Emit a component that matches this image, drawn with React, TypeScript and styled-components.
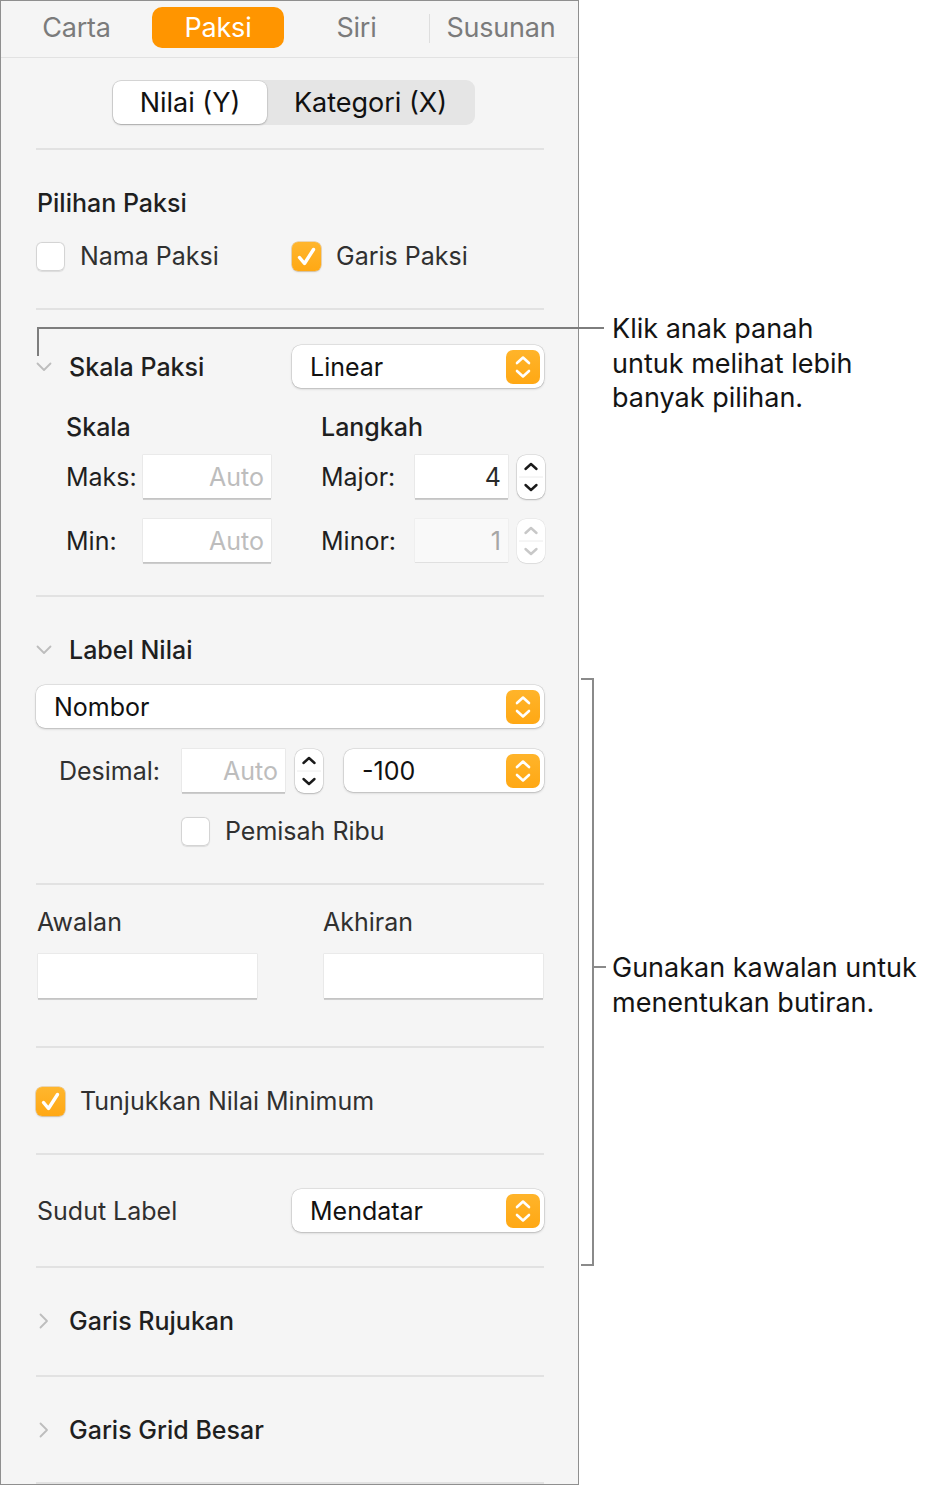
import React from "react";
import styled, { createGlobalStyle } from "styled-components";

const Global = createGlobalStyle`
  html, body { margin: 0; padding: 0; background: #ffffff; }
  body { font-family: Inter, "Noto Sans", sans-serif; -webkit-font-smoothing: antialiased; color: #222; }
  * { box-sizing: border-box; }
`;

const ORANGE = "#ff9500";
const ORANGE_LIGHT = "#ffa814";

const Page = styled.div`
  position: relative;
  width: 929px;
  height: 1485px;
  display: flex;
  align-items: flex-start;
`;

const Panel = styled.div`
  width: 579px;
  height: 1485px;
  background: #f5f5f5;
  border: 1px solid #8f8f8f;
  display: flex;
  flex-direction: column;
`;

const TabBar = styled.div`
  height: 57px;
  border-bottom: 1px solid #e2e2e2;
  display: flex;
  align-items: flex-start;
  padding-top: 6px;
`;

const Tab = styled.div<{ $w: number; $active?: boolean }>`
  width: ${(p) => p.$w}px;
  height: 41px;
  border-radius: 10px;
  display: flex;
  align-items: center;
  justify-content: center;
  font-size: 27px;
  letter-spacing: -0.2px;
  color: ${(p) => (p.$active ? "#ffffff" : "#7b7b7b")};
  background: ${(p) => (p.$active ? ORANGE : "transparent")};
`;

const TabSep = styled.div`
  width: 1px;
  height: 29px;
  margin-top: 7px;
  background: #dedede;
`;

const SegWrap = styled.div`
  display: flex;
  padding: 22px 0 23px 111px;
`;

const Segmented = styled.div`
  width: 363px;
  height: 45px;
  border-radius: 9px;
  background: #e5e5e5;
  padding: 1px;
  display: flex;
`;

const Segment = styled.div<{ $w: number; $active?: boolean }>`
  width: ${(p) => p.$w}px;
  height: 43px;
  border-radius: 8px;
  display: flex;
  align-items: center;
  justify-content: center;
  font-size: 27px;
  color: #111;
  background: ${(p) => (p.$active ? "#fff" : "transparent")};
  box-shadow: ${(p) =>
    p.$active ? "0 0 0 0.5px rgba(0,0,0,0.12), 0 1px 2px rgba(0,0,0,0.22)" : "none"};
`;

const Content = styled.div`
  padding: 0 34px 0 35px;
  display: flex;
  flex-direction: column;
`;

const Divider = styled.div`
  height: 2px;
  background: #e2e2e2;
`;

const Section = styled.div<{ $pt: number; $pb: number; $gap?: number }>`
  padding: ${(p) => p.$pt}px 0 ${(p) => p.$pb}px;
  display: flex;
  flex-direction: column;
  gap: ${(p) => p.$gap ?? 0}px;
`;

const Title = styled.div<{ $indent?: number }>`
  height: 30px;
  line-height: 30px;
  font-size: 25px;
  font-weight: 500;
  color: #1f1f1f;
  white-space: nowrap;
  padding-left: ${(p) => p.$indent ?? 1}px;
`;

const Label = styled.div<{ $w?: number; $muted?: boolean }>`
  ${(p) => (p.$w ? `width: ${p.$w}px; flex: none;` : "")}
  font-size: 25px;
  line-height: 30px;
  color: ${(p) => (p.$muted ? "#303030" : "#1f1f1f")};
  white-space: nowrap;
`;

const Row = styled.div<{ $h?: number; $indent?: number; $gap?: number }>`
  display: flex;
  align-items: center;
  height: ${(p) => p.$h ?? 30}px;
  padding-left: ${(p) => p.$indent ?? 0}px;
  gap: ${(p) => p.$gap ?? 0}px;
`;

const CheckItem = styled.div<{ $w?: number }>`
  display: flex;
  align-items: center;
  gap: 15px;
  ${(p) => (p.$w ? `width: ${p.$w}px;` : "")}
`;

const Box = styled.div<{ $checked?: boolean }>`
  width: 29px;
  height: 29px;
  border-radius: 6px;
  flex: none;
  display: flex;
  align-items: center;
  justify-content: center;
  background: ${(p) =>
    p.$checked ? `linear-gradient(#ffb62e, ${ORANGE_LIGHT})` : "#ffffff"};
  box-shadow: ${(p) =>
    p.$checked
      ? "0 0 0 0.5px rgba(210,130,0,0.5), 0 1px 2px rgba(0,0,0,0.15)"
      : "inset 0 0 0 1px #d4d4d4, 0 0.5px 1px rgba(0,0,0,0.1)"};
`;

const Disclosure = styled.div`
  width: 33px;
  flex: none;
  display: flex;
  align-items: center;
  justify-content: flex-start;
`;

const Select = styled.div<{ $w?: number }>`
  ${(p) => (p.$w ? `width: ${p.$w}px;` : "flex: 1;")}
  height: 43px;
  margin-left: auto;
  background: #ffffff;
  border-radius: 9px;
  box-shadow: 0 0 0 0.5px rgba(0,0,0,0.14), 0 1px 2.5px rgba(0,0,0,0.2);
  display: flex;
  align-items: center;
  padding: 0 4px 0 18px;
  font-size: 25px;
  color: #111;
`;

const SelectText = styled.span`
  flex: 1;
`;

const SelectBtn = styled.div`
  width: 34px;
  height: 34px;
  border-radius: 7px;
  background: linear-gradient(#ffb42a, ${ORANGE_LIGHT});
  display: flex;
  align-items: center;
  justify-content: center;
`;

const Grid2 = styled.div<{ $cols: string; $gap: number; $indent?: number }>`
  display: grid;
  grid-template-columns: ${(p) => p.$cols};
  column-gap: ${(p) => p.$gap}px;
  padding-left: ${(p) => p.$indent ?? 0}px;
`;

const Col = styled.div<{ $gap: number }>`
  display: flex;
  flex-direction: column;
  gap: ${(p) => p.$gap}px;
`;

const Field = styled.div<{ $w?: number; $disabled?: boolean; $h?: number }>`
  ${(p) => (p.$w ? `width: ${p.$w}px; flex: none;` : "")}
  height: ${(p) => p.$h ?? 43}px;
  background: ${(p) => (p.$disabled ? "#f9f9f9" : "#ffffff")};
  box-shadow: ${(p) =>
    p.$disabled
      ? "0 0 0 0.5px rgba(0,0,0,0.05), 0 1px 0 rgba(0,0,0,0.06)"
      : "0 0 0 0.5px rgba(0,0,0,0.09), 0 1.5px 0.5px rgba(0,0,0,0.16)"};
  display: flex;
  align-items: center;
  justify-content: flex-end;
  padding-right: 7px;
  font-size: 25px;
  color: ${(p) => (p.$disabled ? "#a6a6a6" : "#2a2a2a")};
`;

const Placeholder = styled.span`
  color: #bdbdbd;
`;

const Stepper = styled.div<{ $disabled?: boolean }>`
  width: 28px;
  height: 44px;
  flex: none;
  border-radius: 9px;
  background: #ffffff;
  box-shadow: ${(p) =>
    p.$disabled
      ? "0 0 0 0.5px rgba(0,0,0,0.08), 0 1px 1px rgba(0,0,0,0.06)"
      : "0 0 0 0.5px rgba(0,0,0,0.14), 0 1px 2px rgba(0,0,0,0.2)"};
  display: flex;
  align-items: center;
  justify-content: center;
`;

const Overlay = styled.div`
  position: absolute;
  background: #7d7d7d;
`;

const Bracket = styled.div`
  position: absolute;
  left: 581px;
  top: 678px;
  width: 13px;
  height: 588px;
  border: 2px solid #8a8a8a;
  border-left: none;
`;

const Note = styled.div<{ $top: number }>`
  position: absolute;
  left: 612px;
  top: ${(p) => p.$top}px;
  font-size: 27px;
  line-height: 34.5px;
  color: #141414;
  white-space: nowrap;
`;

const ChevronDown = () => (
  <svg width="16" height="10" viewBox="0 0 16 10">
    <path d="M1.5 1.5 L8 8 L14.5 1.5" fill="none" stroke="#bdbdbd" strokeWidth="1.8" strokeLinecap="round" strokeLinejoin="round" />
  </svg>
);

const ChevronRight = () => (
  <svg width="10" height="16" viewBox="0 0 10 16" style={{ marginLeft: 3 }}>
    <path d="M1.5 1.5 L8 8 L1.5 14.5" fill="none" stroke="#bdbdbd" strokeWidth="1.8" strokeLinecap="round" strokeLinejoin="round" />
  </svg>
);

const UpDown = () => (
  <svg width="20" height="26" viewBox="0 0 20 26">
    <path d="M4 9 L10 3.5 L16 9" fill="none" stroke="#fff" strokeWidth="2.6" strokeLinecap="round" strokeLinejoin="round" />
    <path d="M4 17 L10 22.5 L16 17" fill="none" stroke="#fff" strokeWidth="2.6" strokeLinecap="round" strokeLinejoin="round" />
  </svg>
);

const StepIcon = ({ disabled }: { disabled?: boolean }) => {
  const c = disabled ? "#c8c8c8" : "#1a1a1a";
  return (
    <svg width="28" height="44" viewBox="0 0 28 44">
      <path d="M8.5 14 L14 9 L19.5 14" fill="none" stroke={c} strokeWidth="2.4" strokeLinecap="round" strokeLinejoin="round" />
      <line x1="2" y1="22" x2="26" y2="22" stroke="#ececec" strokeWidth="1" />
      <path d="M8.5 30 L14 35 L19.5 30" fill="none" stroke={c} strokeWidth="2.4" strokeLinecap="round" strokeLinejoin="round" />
    </svg>
  );
};

const Check = () => (
  <svg width="29" height="29" viewBox="0 0 29 29">
    <path d="M7.5 15.5 L12.5 21.5 L21.5 7.5" fill="none" stroke="#fff" strokeWidth="3.4" strokeLinecap="round" strokeLinejoin="round" />
  </svg>
);

const PopUp = ({ text, w }: { text: string; w?: number }) => (
  <Select $w={w}>
    <SelectText>{text}</SelectText>
    <SelectBtn>
      <UpDown />
    </SelectBtn>
  </Select>
);

export default function App() {
  return (
    <Page>
      <Global />
      <Panel>
        <TabBar>
          <Tab $w={151}>Carta</Tab>
          <Tab $w={132} $active>
            Paksi
          </Tab>
          <Tab $w={145}>Siri</Tab>
          <TabSep />
          <Tab $w={142}>Susunan</Tab>
        </TabBar>

        <SegWrap>
          <Segmented>
            <Segment $w={154} $active>
              Nilai (Y)
            </Segment>
            <Segment $w={207}>Kategori (X)</Segment>
          </Segmented>
        </SegWrap>

        <Content>
          <Divider />

          <Section $pt={38} $pb={37} $gap={23}>
            <Title>Pilihan Paksi</Title>
            <Row>
              <CheckItem $w={256}>
                <Box />
                <Label $muted>Nama Paksi</Label>
              </CheckItem>
              <CheckItem>
                <Box $checked>
                  <Check />
                </Box>
                <Label $muted>Garis Paksi</Label>
              </CheckItem>
            </Row>
          </Section>

          <Divider />

          <Section $pt={35} $pb={33}>
            <Row $h={43}>
              <Disclosure>
                <ChevronDown />
              </Disclosure>
              <Title $indent={0}>Skala Paksi</Title>
              <PopUp text="Linear" w={252} />
            </Row>
            <Grid2 $cols="205px 224px" $gap={50} $indent={30} style={{ marginTop: 24 }}>
              <Col $gap={13}>
                <Title $indent={0}>Skala</Title>
                <Row $h={43}>
                  <Label $w={77}>Maks:</Label>
                  <Field $w={128}>
                    <Placeholder>Auto</Placeholder>
                  </Field>
                </Row>
                <Row $h={43} style={{ marginTop: 8 }}>
                  <Label $w={77}>Min:</Label>
                  <Field $w={128}>
                    <Placeholder>Auto</Placeholder>
                  </Field>
                </Row>
              </Col>
              <Col $gap={13}>
                <Title $indent={0}>Langkah</Title>
                <Row $h={43}>
                  <Label $w={94}>Major:</Label>
                  <Field $w={93}>4</Field>
                  <Stepper style={{ marginLeft: 9 }}>
                    <StepIcon />
                  </Stepper>
                </Row>
                <Row $h={43} style={{ marginTop: 8 }}>
                  <Label $w={94}>Minor:</Label>
                  <Field $w={93} $disabled>
                    1
                  </Field>
                  <Stepper $disabled style={{ marginLeft: 9 }}>
                    <StepIcon disabled />
                  </Stepper>
                </Row>
              </Col>
            </Grid2>
          </Section>

          <Divider />

          <Section $pt={38} $pb={37} $gap={21}>
            <Row>
              <Disclosure>
                <ChevronDown />
              </Disclosure>
              <Title $indent={0}>Label Nilai</Title>
            </Row>
            <Row $h={41}>
              <PopUp text="Nombor" />
            </Row>
            <Row $h={45} $indent={23}>
              <Label $w={123} $muted>
                Desimal:
              </Label>
              <Field $w={103}>
                <Placeholder>Auto</Placeholder>
              </Field>
              <Stepper style={{ marginLeft: 10 }}>
                <StepIcon />
              </Stepper>
              <PopUp text="-100" w={200} />
            </Row>
            <Row $indent={145} style={{ marginTop: 2 }}>
              <CheckItem>
                <Box />
                <Label $muted>Pemisah Ribu</Label>
              </CheckItem>
            </Row>
          </Section>

          <Divider />

          <Section $pt={22} $pb={48}>
            <Grid2 $cols="221px 221px" $gap={66}>
              <Col $gap={17}>
                <Label $muted style={{ paddingLeft: 1 }}>Awalan</Label>
                <Field $h={44} style={{ marginLeft: 2, marginRight: 0 }} />
              </Col>
              <Col $gap={17}>
                <Label $muted>Akhiran</Label>
                <Field $h={44} style={{ marginLeft: 1, marginRight: 1 }} />
              </Col>
            </Grid2>
          </Section>

          <Divider />

          <Section $pt={38} $pb={37}>
            <Row>
              <CheckItem>
                <Box $checked>
                  <Check />
                </Box>
                <Label $muted>Tunjukkan Nilai Minimum</Label>
              </CheckItem>
            </Row>
          </Section>

          <Divider />

          <Section $pt={34} $pb={34}>
            <Row $h={43}>
              <Label $muted style={{ paddingLeft: 1 }}>Sudut Label</Label>
              <PopUp text="Mendatar" w={252} />
            </Row>
          </Section>

          <Divider />

          <Section $pt={38} $pb={39}>
            <Row>
              <Disclosure>
                <ChevronRight />
              </Disclosure>
              <Title $indent={0}>Garis Rujukan</Title>
            </Row>
          </Section>

          <Divider />

          <Section $pt={38} $pb={37}>
            <Row>
              <Disclosure>
                <ChevronRight />
              </Disclosure>
              <Title $indent={0}>Garis Grid Besar</Title>
            </Row>
          </Section>

          <Divider />
        </Content>
      </Panel>

      <Overlay style={{ left: 37, top: 327, width: 567, height: 2 }} />
      <Overlay style={{ left: 37, top: 327, width: 2, height: 29 }} />
      <Note $top={312}>
        Klik anak panah
        <br />
        untuk melihat lebih
        <br />
        banyak pilihan.
      </Note>

      <Bracket />
      <Overlay style={{ left: 592, top: 966, width: 14, height: 2, background: "#8a8a8a" }} />
      <Note $top={951}>
        Gunakan kawalan untuk
        <br />
        menentukan butiran.
      </Note>
    </Page>
  );
}
